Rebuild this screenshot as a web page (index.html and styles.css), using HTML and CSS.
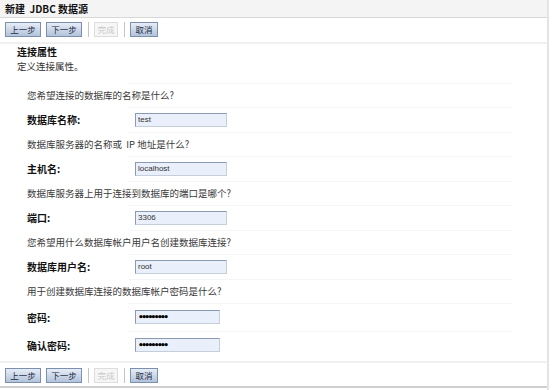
FILE: index.html
```html
<!DOCTYPE html>
<html lang="zh-CN">

<head>
  <meta charset="utf-8">
  <title>新建 JDBC 数据源</title>
  <link rel="stylesheet" href="styles.css">
</head>

<body>
  <div class="page">
    <div class="titlebar">新建&nbsp; JDBC 数据源</div>

    <div class="toolbar">
      <button class="btn">上一步</button>
      <button class="btn">下一步</button>
      <span class="sep"></span>
      <button class="btn btn-small" disabled>完成</button>
      <span class="sep"></span>
      <button class="btn btn-cancel">取消</button>
    </div>

    <div class="section">
      <div class="section-title">连接属性</div>
      <div class="section-desc">定义连接属性。</div>
    </div>

    <div class="form">
      <div class="row question">您希望连接的数据库的名称是什么?</div>
      <div class="row field">
        <label class="label">数据库名称:</label>
        <input class="text" type="text" value="test">
      </div>

      <div class="row question">数据库服务器的名称或&nbsp; IP 地址是什么?</div>
      <div class="row field">
        <label class="label">主机名:</label>
        <input class="text" type="text" value="localhost">
      </div>

      <div class="row question">数据库服务器上用于连接到数据库的端口是哪个?</div>
      <div class="row field">
        <label class="label">端口:</label>
        <input class="text" type="text" value="3306">
      </div>

      <div class="row question">您希望用什么数据库帐户用户名创建数据库连接?</div>
      <div class="row field">
        <label class="label">数据库用户名:</label>
        <input class="text" type="text" value="root">
      </div>

      <div class="row question">用于创建数据库连接的数据库帐户密码是什么?</div>
      <div class="row field tall">
        <label class="label">密码:</label>
        <input class="text pass" type="text" value="•••••••••">
      </div>
      <div class="row field tall">
        <label class="label">确认密码:</label>
        <input class="text pass" type="text" value="•••••••••">
      </div>
    </div>

    <div class="toolbar toolbar-bottom">
      <button class="btn">上一步</button>
      <button class="btn">下一步</button>
      <span class="sep"></span>
      <button class="btn btn-small" disabled>完成</button>
      <span class="sep"></span>
      <button class="btn btn-cancel">取消</button>
    </div>
  </div>
</body>

</html>
```

FILE: styles.css
```css
* {
  margin: 0;
  padding: 0;
  box-sizing: border-box;
  font-family: "Noto Sans CJK SC", "Liberation Sans", sans-serif;
}

body {
  background: #ffffff;
  color: #222;
}

.page {
  width: 549px;
  height: 390px;
  border-right: 2px solid #e4e4e4;
  display: flex;
  flex-direction: column;
}

/* header band */
.titlebar {
  height: 18px;
  line-height: 17px;
  padding-left: 5px;
  background: #f4f4f4;
  border-bottom: 1px solid #d8d8d8;
  font-size: 10px;
  font-weight: bold;
  color: #111;
}

.toolbar {
  display: flex;
  align-items: center;
  gap: 5px;
  height: 26px;
  padding: 0 5px 2px;
  border-bottom: 2px solid #f0f0f0;
}

.toolbar-bottom {
  margin-top: 2px;
  height: 27px;
  border-top: 2px solid #f0f0f0;
  border-bottom: 2px solid #cfcfcf;
  padding: 2px 5px 0;
}

.btn {
  width: 36px;
  height: 15px;
  font-size: 8.5px;
  line-height: 13px;
  color: #1c2a40;
  background: linear-gradient(#e6edf7, #b2c3da);
  border: 1px solid #7c90ad;
  cursor: pointer;
}

.btn-small {
  width: 24px;
}

.btn-cancel {
  width: 28px;
}

.btn:disabled {
  color: #c9c9c9;
  background: #f6f6f6;
  border-color: #dddddd;
  cursor: default;
}

.sep {
  width: 1px;
  height: 15px;
  background: #c4c4c4;
  margin: 0 0 0 1px;
}

.section {
  padding: 1px 0 0 17px;
}

.section-title {
  font-size: 10px;
  font-weight: bold;
  line-height: 14px;
  color: #111;
}

.section-desc {
  font-size: 9.5px;
  line-height: 14px;
  color: #333;
}

.form {
  margin-top: 10px;
  margin-left: 27px;
  width: 485px;
}

.row {
  display: flex;
  align-items: center;
  background: linear-gradient(#f5f5f5, #f5f5f5) no-repeat 101px 0 / calc(100% - 101px) 1px;
}

.question {
  height: 24px;
  font-size: 9.5px;
  color: #3a3a3a;
}

.field {
  height: 25px;
}

.field.tall {
  height: 28px;
}

.label {
  width: 108px;
  font-size: 10px;
  font-weight: bold;
  color: #111;
}

.text {
  width: 92px;
  height: 14px;
  padding: 0 2px;
  font-family: "Liberation Sans", sans-serif;
  font-size: 8px;
  color: #333;
  background: #e9effb;
  border: 1px solid #8a9ab2;
  border-right-color: #c5cedb;
  border-bottom-color: #c5cedb;
  outline: none;
}

.text.pass {
  width: 85px;
  font-family: "DejaVu Sans", sans-serif;
  font-size: 9px;
  font-weight: bold;
  letter-spacing: -2.6px;
  color: #000;
}
```
